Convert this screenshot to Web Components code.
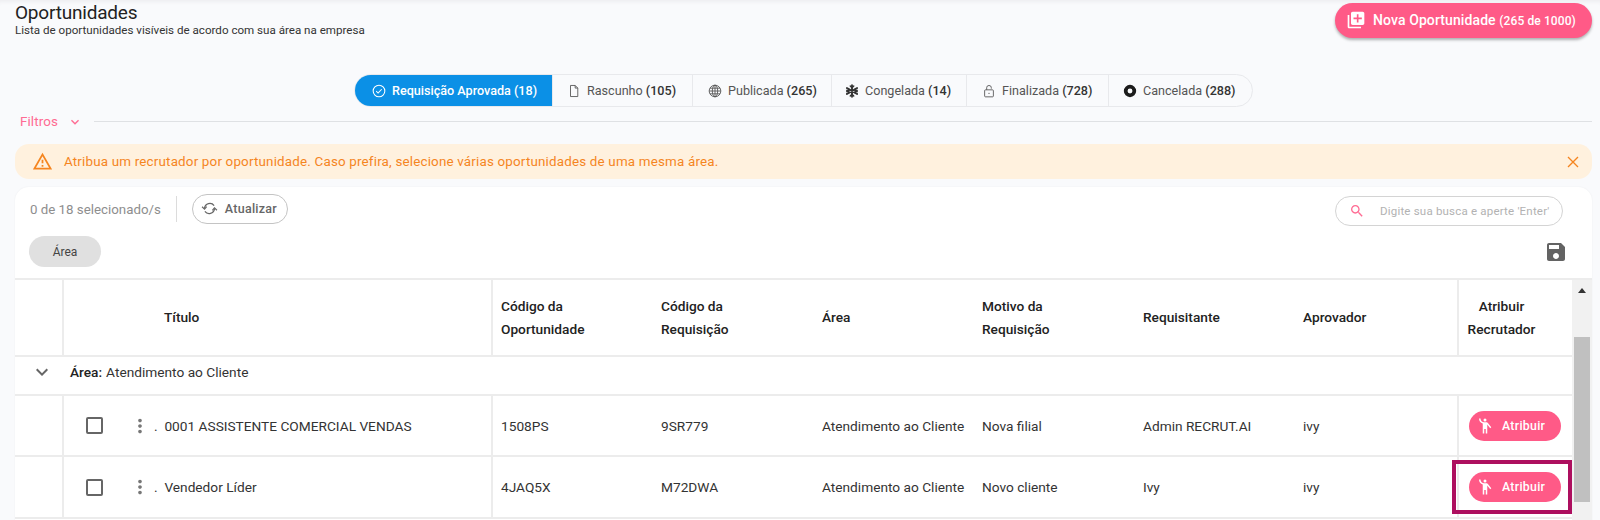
<!DOCTYPE html>
<html lang="pt-BR">
<head>
<meta charset="utf-8">
<title>Oportunidades</title>
<style>
  html, body { margin: 0; height: 520px; overflow: hidden; }
  body { background: #f9fafc; font-family: Roboto, "Liberation Sans", sans-serif; color: #212121; }
</style>
</head>
<body>
<opp-page>
  <page-header slot="header"></page-header>
  <status-tabs slot="tabs">
    <status-tab icon="check" count="18" size="198" inset="18" active>Requisição Aprovada</status-tab>
    <status-tab icon="file" count="105" size="140" inset="14">Rascunho</status-tab>
    <status-tab icon="globe" count="265" size="139" inset="15">Publicada</status-tab>
    <status-tab icon="snow" count="14" size="135" inset="13">Congelada</status-tab>
    <status-tab icon="lock" count="728" size="142" inset="15">Finalizada</status-tab>
    <status-tab icon="ring" count="288" size="144" inset="14">Cancelada</status-tab>
  </status-tabs>
  <filter-bar slot="filters"></filter-bar>
  <alert-banner slot="alert">Atribua um recrutador por oportunidade. Caso prefira, selecione várias oportunidades de uma mesma área.</alert-banner>
  <data-card slot="card">
    <opp-table>
      <opp-row code="1508PS" req="9SR779" area="Atendimento ao Cliente" reason="Nova filial" requester="Admin RECRUT.AI" approver="ivy">0001 ASSISTENTE COMERCIAL VENDAS</opp-row>
      <opp-row code="4JAQ5X" req="M72DWA" area="Atendimento ao Cliente" reason="Novo cliente" requester="Ivy" approver="ivy" highlight>Vendedor Líder</opp-row>
    </opp-table>
  </data-card>
</opp-page>

<script>
const ICONS = {
  check: '<svg viewBox="0 0 24 24" fill="none" stroke="currentColor" stroke-width="1.8"><circle cx="12" cy="12" r="10"/><path d="M7.2 12.4l3.2 3.2 6.2-6.6"/></svg>',
  file: '<svg viewBox="0 0 24 24" fill="none" stroke="currentColor" stroke-width="1.5"><path d="M6 2.5h8l4.5 4.5v14.5H6z"/><path d="M14 2.5V7h4.5"/></svg>',
  globe: '<svg viewBox="0 0 24 24" fill="none" stroke="currentColor" stroke-width="1.5"><circle cx="12" cy="12" r="10"/><ellipse cx="12" cy="12" rx="4.6" ry="10"/><path d="M12 2v20M2 12h20M3.4 7.2h17.2M3.4 16.8h17.2"/></svg>',
  snow: '<svg viewBox="0 0 24 24" fill="none" stroke="#333" stroke-width="3.2" stroke-linecap="round"><path d="M12 2v20M3.3 7l17.4 10M20.7 7L3.3 17"/><path stroke-width="2.4" d="M9 3.5l3 3 3-3M9 20.5l3-3 3 3M3 11l4 1-1 4M21 11l-4 1 1 4M3 13l4-1-1-4M21 13l-4-1 1-4"/></svg>',
  lock: '<svg viewBox="0 0 24 24" fill="none" stroke="currentColor" stroke-width="1.5"><rect x="4.5" y="10" width="15" height="12" rx="1.5"/><path d="M8 10V6.5a4 4 0 0 1 8 0V8"/><circle cx="12" cy="16" r="1.1" fill="currentColor" stroke="none"/></svg>',
  ring: '<svg viewBox="0 0 24 24" fill="none" stroke="#1c1c1c" stroke-width="6.4"><circle cx="12" cy="12" r="7.4"/></svg>',
  add: '<svg viewBox="0 0 24 24" fill="currentColor"><path d="M4 6H2v14c0 1.1.9 2 2 2h14v-2H4V6zm16-4H8c-1.1 0-2 .9-2 2v12c0 1.1.9 2 2 2h12c1.1 0 2-.9 2-2V4c0-1.1-.9-2-2-2zm-1 9h-4v4h-2v-4H9V9h4V5h2v4h4v2z"/></svg>',
  chevron: '<svg viewBox="0 0 24 24" fill="currentColor"><path d="M16.59 8.59L12 13.17 7.41 8.59 6 10l6 6 6-6z"/></svg>',
  warning: '<svg viewBox="0 0 24 24" fill="currentColor"><path d="M12 5.99L19.53 19H4.47L12 5.99M12 2L1 21h22L12 2zm1 14h-2v2h2v-2zm0-6h-2v4h2v-4z"/></svg>',
  close: '<svg viewBox="0 0 24 24" fill="none" stroke="currentColor" stroke-width="2"><path d="M4.5 4.5l15 15M19.5 4.5l-15 15"/></svg>',
  sync: '<svg viewBox="0 0 24 24" fill="none" stroke="currentColor" stroke-width="1.8"><path d="M5 11.5A7.5 7.5 0 0 1 18.5 8"/><path d="M19 12.5A7.5 7.5 0 0 1 5.5 16"/><path d="M1.5 9.5L5 13l3-3.5" stroke-width="1.6"/><path d="M22.5 14.5L19 11l-3 3.5" stroke-width="1.6"/></svg>',
  search: '<svg viewBox="0 0 24 24" fill="currentColor"><path d="M15.5 14h-.79l-.28-.27C15.41 12.59 16 11.11 16 9.5 16 5.91 13.09 3 9.5 3S3 5.91 3 9.5 5.91 16 9.5 16c1.61 0 3.09-.59 4.23-1.57l.27.28v.79l5 4.99L20.49 19l-4.99-5zm-6 0C7.01 14 5 11.99 5 9.5S7.01 5 9.5 5 14 7.01 14 9.5 11.99 14 9.5 14z"/></svg>',
  save: '<svg viewBox="3 3 18 18" fill="currentColor"><path d="M17 3H5c-1.11 0-2 .9-2 2v14c0 1.1.89 2 2 2h14c1.1 0 2-.9 2-2V7l-4-4zm-5 16c-1.66 0-3-1.34-3-3s1.34-3 3-3 3 1.34 3 3-1.34 3-3 3zm3-10H5V5h10v4z"/></svg>',
  dots: '<svg viewBox="0 0 24 24" fill="currentColor"><path d="M12 8c1.1 0 2-.9 2-2s-.9-2-2-2-2 .9-2 2 .9 2 2 2zm0 2c-1.1 0-2 .9-2 2s.9 2 2 2 2-.9 2-2-.9-2-2-2zm0 6c-1.1 0-2 .9-2 2s.9 2 2 2 2-.9 2-2-.9-2-2-2z"/></svg>',
  wave: '<svg viewBox="0 0 24 24" fill="currentColor"><circle cx="12" cy="4" r="2"/><path d="M15.89 8.11C15.5 7.72 14.83 7 13.53 7h-2.54C8.24 6.99 6 4.75 6 2H4c0 3.16 2.11 5.84 5 6.71V22h2v-6h2v6h2V10.05L18.95 15l1.41-1.41-4.47-5.48z"/></svg>'
}

/**
 * Helper, define an element with a shadow root from a html string.
 *
 * @param {string} name - Tag name.
 * @param {Function} render - Gets the element, returns the shadow html.
 */
function define (name, render) {
  customElements.define(name, class extends HTMLElement {
    constructor () {
      super()
      this.attachShadow({ mode: 'open' })
    }

    connectedCallback () {
      this.shadowRoot.innerHTML = render(this)
    }
  })
}

define('opp-page', () => `
  <style>
    :host { display: block; height: 520px; position: relative; box-shadow: inset 0 5px 5px -4px #e9e9ec; }
    .top { padding: 3px 8px 0 15px; height: 74px; box-sizing: border-box; }
    .tabs { display: flex; justify-content: center; margin-left: 8px; width: 1591px; }
    .filters { padding: 6px 8px 0 15px; }
    .alert { padding: 15px 8px 0 15px; }
    .card { padding: 8px 8px 0 15px; }
  </style>
  <div class="top"><slot name="header"></slot></div>
  <div class="tabs"><slot name="tabs"></slot></div>
  <div class="filters"><slot name="filters"></slot></div>
  <div class="alert"><slot name="alert"></slot></div>
  <div class="card"><slot name="card"></slot></div>
`)

define('page-header', () => `
  <style>
    :host { display: flex; justify-content: space-between; align-items: flex-start; }
    h1 { margin: 0; font: 400 19px/20px Roboto, sans-serif; letter-spacing: -.2px; color: #222; }
    p { margin: 0; font: 400 11.6px/14px Roboto, sans-serif; color: #333; }
    button { display: flex; align-items: center; gap: 7px; width: 257px; height: 35px; padding: 0 0 1px 11px; box-sizing: border-box; border: 0; border-radius: 18px; background: #ff5a87; color: #fff; font: 500 14px Roboto, sans-serif; letter-spacing: .1px; box-shadow: 0 2px 3px rgba(0,0,0,.3); white-space: nowrap; }
    button small { font-size: 12px; }
    svg { width: 20px; height: 20px; flex: none; }
  </style>
  <div><h1>Oportunidades</h1><p>Lista de oportunidades visíveis de acordo com sua área na empresa</p></div>
  <button>${ICONS.add}<span>Nova Oportunidade <small>(265 de 1000)</small></span></button>
`)

define('status-tabs', () => `
  <style>
    :host { display: inline-flex; height: 33px; box-sizing: border-box; border: 1px solid #e8e9ec; border-radius: 17px; overflow: hidden; }
  </style>
  <slot></slot>
`)

define('status-tab', el => `
  <style>
    :host { display: flex; align-items: center; gap: 6px; height: 100%; width: ${el.getAttribute('size')}px; padding-left: ${el.getAttribute('inset')}px; box-sizing: border-box; border-left: 1px solid #e8e9ec; font: 400 12.6px Roboto, sans-serif; color: #555; white-space: nowrap; }
    :host(:first-child) { border-left: 0; }
    :host([active]) { background: #0b90e6; color: #fff; font-weight: 500; margin: -1px 0 -1px -1px; height: 33px; }
    svg { width: 14px; height: 14px; flex: none; }
    b { font-weight: 500; color: ${el.hasAttribute('active') ? '#fff' : '#333'}; }
  </style>
  ${ICONS[el.getAttribute('icon')]}<span><slot></slot> <b>(${el.getAttribute('count')})</b></span>
`)

define('filter-bar', () => `
  <style>
    :host { display: flex; align-items: center; height: 16px; font: 400 13.4px Roboto, sans-serif; letter-spacing: .1px; color: #ff6b93; padding-left: 5px; }
    svg { width: 16px; height: 16px; margin-left: 9px; margin-top: 2px; flex: none; }
    i { flex: 1; height: 1px; background: #dfe1e4; margin-left: 11px; }
  </style>
  <span>Filtros</span>${ICONS.chevron}<i></i>
`)

define('alert-banner', () => `
  <style>
    :host { display: flex; align-items: center; height: 35px; padding: 0 11px 0 17px; border-radius: 14px; background: #fff1de; color: #f5851f; font: 400 13.4px Roboto, sans-serif; letter-spacing: .18px; }
    svg { flex: none; }
    .warn { display: contents; }
    .warn svg { width: 21px; height: 21px; margin-right: 11px; }
    span { flex: 1; }
    .x svg { display: block; width: 16px; height: 16px; }
  </style>
  <div class="warn">${ICONS.warning}</div><span><slot></slot></span><div class="x">${ICONS.close}</div>
`)

define('data-card', () => `
  <style>
    :host { display: block; background: #fff; border-radius: 14px 14px 0 0; height: 340px; box-shadow: 0 0 2px rgba(0,0,0,.06); }
    .bar { display: flex; justify-content: space-between; align-items: flex-start; padding: 7px 29px 0 15px; height: 43px; box-sizing: border-box; }
    .left { display: flex; align-items: center; height: 30px; font: 400 13.3px Roboto, sans-serif; color: #8e8e8e; }
    .left i { width: 1px; height: 26px; background: #dcdcdc; margin: 0 15px; }
    .refresh { display: flex; align-items: center; gap: 7px; width: 96px; height: 30px; padding: 0 0 1px 8px; box-sizing: border-box; border: 1px solid #c4c4c4; border-radius: 15px; color: #666; font: 500 12.5px Roboto, sans-serif; letter-spacing: .25px; }
    .refresh svg { width: 17px; height: 17px; flex: none; }
    .search { display: flex; align-items: center; width: 228px; height: 30px; margin-top: 2px; box-sizing: border-box; border: 1px solid #d4d4d4; border-radius: 15px; padding-left: 13px; font: 400 11.5px Roboto, sans-serif; letter-spacing: .2px; color: #b2b2b2; white-space: nowrap; }
    .search svg { width: 16px; height: 16px; margin-right: 15px; color: #ff6b93; flex: none; }
    .row2 { display: flex; justify-content: space-between; align-items: center; padding: 6px 27px 11px 14px; height: 48px; box-sizing: border-box; }
    .chip { display: flex; align-items: center; justify-content: center; width: 72px; height: 31px; border-radius: 16px; background: #e0e0e0; font: 400 12px Roboto, sans-serif; color: #444; }
    .save { width: 18px; height: 18px; color: #636363; }
    .save svg { display: block; }
  </style>
  <div class="bar">
    <div class="left"><span>0 de 18 selecionado/s</span><i></i><div class="refresh">${ICONS.sync}<span>Atualizar</span></div></div>
    <div class="search">${ICONS.search}<span>Digite sua busca e aperte 'Enter'</span></div>
  </div>
  <div class="row2"><div class="chip">Área</div><div class="save">${ICONS.save}</div></div>
  <slot></slot>
`)

define('opp-table', () => `
  <style>
    :host { display: block; position: relative; border-top: 2px solid #ececec; height: 242px; padding-right: 20px; --cols: 47px 431px 160px 161px 160px 161px 160px 162px 115px; overflow: hidden; font: 400 13.7px Roboto, sans-serif; }
    .head { display: grid; grid-template-columns: var(--cols); height: 77px; box-sizing: border-box; border-bottom: 2px solid #ececec; font-weight: 500; color: #222; }
    .head > div { display: flex; align-items: center; padding-left: 8px; line-height: 23px; }
    .head > .title { padding-left: 100px; border-left: 2px solid #ececec; border-right: 2px solid #ececec; box-sizing: border-box; }
    .head > .assign { justify-content: center; text-align: center; padding: 0 28px 0 0; border-left: 2px solid #ececec; box-sizing: border-box; }
    .group { display: flex; align-items: center; border-bottom: 2px solid #ececec; padding-bottom: 8px; box-sizing: border-box; height: 39px; color: #333; }
    .group svg { width: 24px; height: 24px; margin: 0 16px 0 15px; color: #666; flex: none; }
    .group b { font-weight: 500; color: #222; margin-right: 4px; }
    .scroll { position: absolute; top: 0; right: 0; bottom: 0; width: 20px; background: #f1f1f1; }
    .scroll u { display: block; margin: 8px auto 0; width: 0; border: 4.5px solid transparent; border-top: 0; border-bottom: 5px solid #333; }
    .scroll i { display: block; position: absolute; top: 57px; left: 2px; width: 16px; height: 165px; background: #c0c0c0; }
  </style>
  <div class="head">
    <div></div><div class="title">Título</div>
    <div>Código da<br>Oportunidade</div><div>Código da<br>Requisição</div><div>Área</div><div>Motivo da<br>Requisição</div><div>Requisitante</div><div>Aprovador</div>
    <div class="assign">Atribuir<br>Recrutador</div>
  </div>
  <div class="group">${ICONS.chevron}<b>Área:</b> Atendimento ao Cliente</div>
  <slot></slot>
  <div class="scroll"><u></u><i></i></div>
`)

define('opp-row', el => `
  <style>
    :host { display: grid; grid-template-columns: var(--cols); height: 61px; box-sizing: border-box; border-bottom: 2px solid #ececec; align-items: center; color: #333; position: relative; }
    :host([highlight]) { height: 62px; }
    div { height: 100%; display: flex; align-items: center; padding-left: 8px; white-space: nowrap; box-sizing: border-box; }
    .title { border-left: 2px solid #ececec; border-right: 2px solid #ececec; padding-left: 22px; }
    .box { width: 17px; height: 17px; box-sizing: border-box; border: 2px solid #666; border-radius: 2px; flex: none; }
    .title svg { width: 22px; height: 22px; margin-left: 26px; color: #777; flex: none; }
    .title span { margin-left: 3px; }
    .assign { border-left: 2px solid #ececec; padding: 0 0 0 10px; }
    button { display: flex; align-items: center; gap: 8px; width: 92px; height: 30px; padding: 0 0 0 7px; box-sizing: border-box; border: 0; border-radius: 15px; background: #ff5a87; color: #fff; font: 500 12.3px Roboto, sans-serif; letter-spacing: .3px; }
    button svg { width: 18px; height: 18px; flex: none; }
    .mark { position: absolute; display: ${el.hasAttribute('highlight') ? 'block' : 'none'}; right: 0; top: 3px; width: 120px; height: 54px; padding: 0; border: 4px solid #ad0f5f; box-sizing: border-box; }
  </style>
  <div></div>
  <div class="title"><i class="box"></i>${ICONS.dots}<span>.&nbsp;&nbsp;<slot></slot></span></div>
  <div>${el.getAttribute('code')}</div>
  <div>${el.getAttribute('req')}</div>
  <div>${el.getAttribute('area')}</div>
  <div>${el.getAttribute('reason')}</div>
  <div>${el.getAttribute('requester')}</div>
  <div>${el.getAttribute('approver')}</div>
  <div class="assign"><button>${ICONS.wave}<span>Atribuir</span></button></div>
  <div class="mark"></div>
`)
</script>
</body>
</html>
